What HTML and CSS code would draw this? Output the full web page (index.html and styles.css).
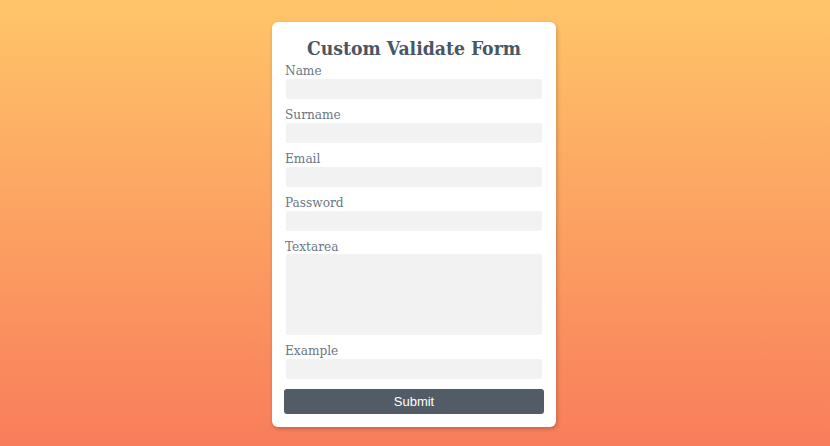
FILE: index.html
```html
<!DOCTYPE html>
<html>
<head>
<meta charset="utf-8">
<link rel="stylesheet" href="styles.css">
</head>
<body>
<form class="card">
  <h1 class="title">Custom Validate Form</h1>
  <label class="label">Name</label>
  <input class="field" type="text">
  <label class="label">Surname</label>
  <input class="field" type="text">
  <label class="label">Email</label>
  <input class="field" type="text">
  <label class="label">Password</label>
  <input class="field" type="password">
  <label class="label">Textarea</label>
  <textarea class="field area"></textarea>
  <label class="label">Example</label>
  <input class="field" type="text">
  <button class="submit" type="button">Submit</button>
</form>
</body>
</html>
```
FILE: styles.css
```css
html, body {
  margin: 0;
  height: 100%;
}
body {
  background: linear-gradient(180deg, #ffc569 0%, #f97d5b 100%);
  font-family: "DejaVu Serif Condensed", "DejaVu Serif", "Liberation Serif", serif;
  display: flex;
  justify-content: center;
  align-items: flex-start;
  padding: 22px 2px 0 0;
  box-sizing: border-box;
}
.card {
  width: 284px;
  box-sizing: border-box;
  background: #fff;
  border-radius: 6px;
  box-shadow: 1px 2px 4px rgba(0,0,0,0.22);
  padding: 15px 12px 13px;
  display: flex;
  flex-direction: column;
}
.title {
  margin: 0;
  font-size: 19.2px;
  line-height: 24px;
  font-weight: 600;
  color: #4a5664;
  text-align: center;
}
.label {
  display: block;
  font-size: 13.5px;
  line-height: 18px;
  color: #6b7684;
  padding-left: 1px;
}
.field {
  display: block;
  border: none;
  outline: none;
  background: #f2f2f2;
  border-radius: 2px;
  height: 20px;
  margin: 0 2px 6px;
  padding: 0;
  box-sizing: border-box;
}
.area {
  height: 81px;
  resize: none;
  margin-top: -1px;
}
.submit {
  margin-top: 4px;
  height: 25px;
  border: none;
  border-radius: 3px;
  background: #525c67;
  color: #fff;
  font-family: "Liberation Sans", Arial, sans-serif;
  font-size: 13px;
  padding: 0;
  cursor: pointer;
}
```
